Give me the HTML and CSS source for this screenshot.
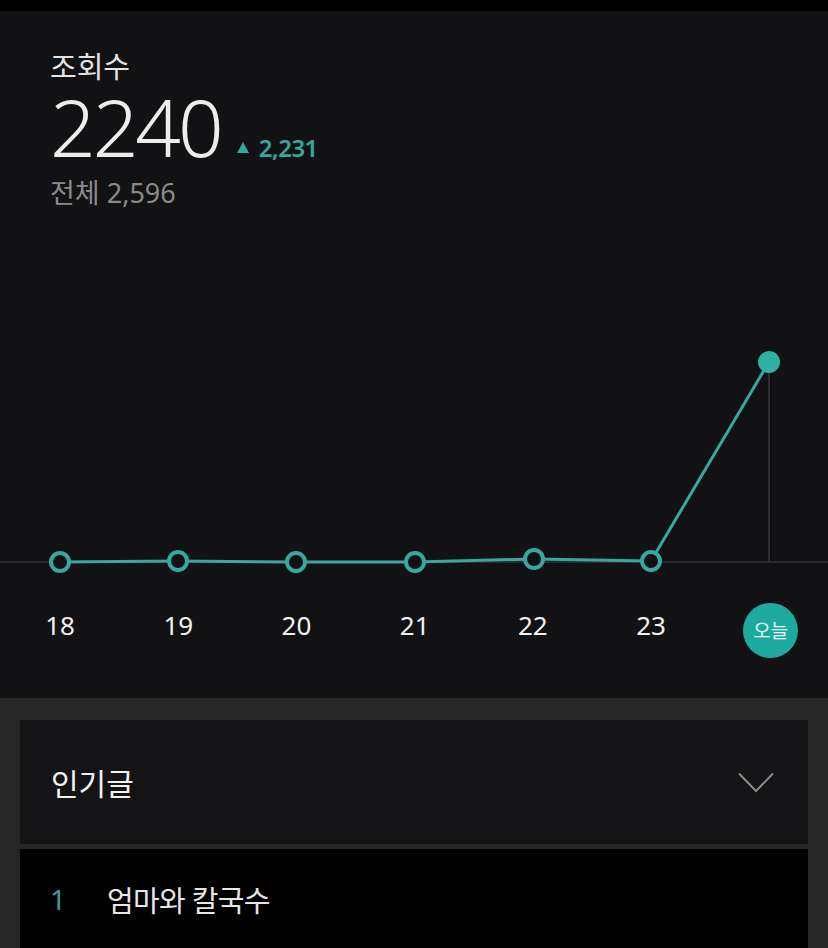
FILE: index.html
```html
<!DOCTYPE html>
<html lang="ko">
<head>
    <meta charset="UTF-8">
    <meta name="viewport" content="width=device-width, initial-scale=1.0">
    <title>블로그 통계</title>
    <link rel="stylesheet" href="styles.css">
</head>
<body>
    <div class="status-bar"></div>

    <!-- 조회수 요약 + 차트 -->
    <section class="stats">
        <div class="summary">
            <div class="summary-title">조회수</div>
            <div class="summary-main">
                <span class="summary-count">2240</span>
                <span class="summary-diff"><span class="diff-arrow"></span>2,231</span>
            </div>
            <div class="summary-total">전체 2,596</div>
        </div>

        <svg class="chart" width="828" height="250" viewBox="0 0 828 250">
            <line x1="0" y1="232" x2="828" y2="232" stroke="#2b2b2d" stroke-width="2"/>
            <line x1="769" y1="32" x2="769" y2="232" stroke="#2f2f31" stroke-width="2"/>
            <polyline points="60,232 178,231 296,232 415,232 534,229 651,231 769,32"
                      fill="none" stroke="#37a89d" stroke-width="3"/>
            <g fill="#121214" stroke="#37a89d" stroke-width="4">
                <circle cx="60" cy="232" r="9"/>
                <circle cx="178" cy="231" r="9"/>
                <circle cx="296" cy="232" r="9"/>
                <circle cx="415" cy="232" r="9"/>
                <circle cx="534" cy="229" r="9"/>
                <circle cx="651" cy="231" r="9"/>
            </g>
            <circle cx="769" cy="32" r="11" fill="#2eb0a5"/>
        </svg>

        <div class="days">
            <span class="day">18</span>
            <span class="day">19</span>
            <span class="day">20</span>
            <span class="day">21</span>
            <span class="day">22</span>
            <span class="day">23</span>
            <span class="day-today"><span class="today">오늘</span></span>
        </div>
    </section>

    <!-- 인기글 -->
    <section class="popular">
        <div class="popular-head">
            <h2>인기글</h2>
            <svg class="chevron" width="36" height="21" viewBox="0 0 36 21">
                <polyline points="1,1.5 18,19 35,1.5" fill="none" stroke="#8b8b8b" stroke-width="2"/>
            </svg>
        </div>
        <div class="popular-item">
            <span class="rank">1</span>
            <span class="post-title">엄마와 칼국수</span>
        </div>
    </section>
</body>
</html>
```

FILE: styles.css
```css
body {
    margin: 0;
    background: #262627;
    font-family: "Noto Sans", "Noto Sans CJK KR", sans-serif;
    color: #ececec;
    overflow: hidden;
}
.status-bar {
    height: 11px;
    background: #000;
}
.stats {
    background: #121214;
    padding: 38px 0 40px;
}
.summary {
    padding-left: 50px;
}
.summary-title {
    font-size: 29px;
    line-height: 36px;
    color: #e4e4e4;
}
.summary-main {
    display: flex;
    align-items: baseline;
    gap: 16px;
}
.summary-count {
    font-size: 80px;
    font-weight: 350;
    line-height: 82px;
    letter-spacing: -3px;
    color: #ededed;
}
.summary-diff {
    font-size: 24px;
    font-weight: 600;
    letter-spacing: -0.5px;
    color: #33a99e;
}
.diff-arrow {
    display: inline-block;
    width: 0;
    height: 0;
    margin-right: 10px;
    border-left: 6px solid transparent;
    border-right: 6px solid transparent;
    border-bottom: 11px solid #33a99e;
    vertical-align: 4px;
}
.summary-total {
    margin-top: 9px;
    font-size: 27px;
    line-height: 34px;
    color: #8a8a8a;
}
.chart {
    display: block;
    margin-top: 120px;
}
.days {
    display: grid;
    grid-template-columns: repeat(7, 118.2px);
    padding-left: 1px;
    margin-top: 22px;
    height: 56px;
}
.day {
    padding-top: 6px;
    text-align: center;
    font-size: 26px;
    line-height: 34px;
    color: #f2f2f2;
}
.day-today {
    display: flex;
    align-items: center;
    justify-content: center;
}
.today {
    display: flex;
    align-items: center;
    justify-content: center;
    width: 55px;
    height: 55px;
    margin-left: 3px;
    border-radius: 50%;
    background: #1ea99f;
    font-size: 19px;
    color: #e6fbf8;
}
.popular {
    padding: 22px 20px 0;
}
.popular-head {
    display: flex;
    align-items: center;
    justify-content: space-between;
    height: 124px;
    padding: 0 34px 0 31px;
    background: #141416;
}
.popular-head h2 {
    margin: 0;
    font-size: 30px;
    font-weight: 400;
    color: #f2f2f2;
}
.popular-item {
    display: flex;
    align-items: center;
    height: 100px;
    margin-top: 5px;
    padding-left: 30px;
    background: #000;
    font-size: 28px;
}
.rank {
    width: 57px;
    color: #3a9f96;
}
.post-title {
    font-size: 29px;
    color: #e6e6e6;
    letter-spacing: -0.7px;
}
```
